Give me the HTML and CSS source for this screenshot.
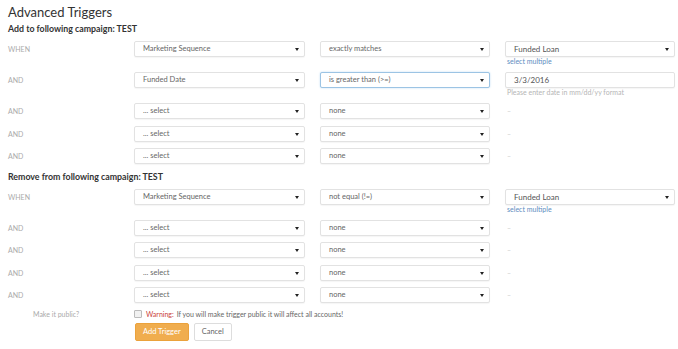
FILE: index.html
```html
<!DOCTYPE html>
<html lang="en">
<head>
  <meta charset="UTF-8" />
  <title>Advanced Triggers</title>
  <link rel="stylesheet" href="styles.css">
</head>
<body>
  <div class="page">
    <h1>Advanced Triggers</h1>

    <h2 class="section-title">Add to following campaign: TEST</h2>
    <div class="row">
      <div class="label">WHEN</div>
      <div class="select">Marketing Sequence</div>
      <div class="select">exactly matches</div>
      <div class="value">
        <div class="select dark">Funded Loan</div>
        <a class="help link">select multiple</a>
      </div>
    </div>
    <div class="row">
      <div class="label">AND</div>
      <div class="select">Funded Date</div>
      <div class="select focused">is greater than (&gt;=)</div>
      <div class="value">
        <div class="input">3/3/2016</div>
        <div class="help">Please enter date in mm/dd/yy format</div>
      </div>
    </div>
    <div class="row">
      <div class="label">AND</div>
      <div class="select">... select</div>
      <div class="select">none</div>
      <div class="dash">&ndash;</div>
    </div>
    <div class="row">
      <div class="label">AND</div>
      <div class="select">... select</div>
      <div class="select">none</div>
      <div class="dash">&ndash;</div>
    </div>
    <div class="row">
      <div class="label">AND</div>
      <div class="select">... select</div>
      <div class="select">none</div>
      <div class="dash">&ndash;</div>
    </div>

    <h2 class="section-title">Remove from following campaign: TEST</h2>
    <div class="row">
      <div class="label">WHEN</div>
      <div class="select">Marketing Sequence</div>
      <div class="select">not equal (!=)</div>
      <div class="value">
        <div class="select dark">Funded Loan</div>
        <a class="help link">select multiple</a>
      </div>
    </div>
    <div class="row">
      <div class="label">AND</div>
      <div class="select">... select</div>
      <div class="select">none</div>
      <div class="dash">&ndash;</div>
    </div>
    <div class="row">
      <div class="label">AND</div>
      <div class="select">... select</div>
      <div class="select">none</div>
      <div class="dash">&ndash;</div>
    </div>
    <div class="row">
      <div class="label">AND</div>
      <div class="select">... select</div>
      <div class="select">none</div>
      <div class="dash">&ndash;</div>
    </div>
    <div class="row">
      <div class="label">AND</div>
      <div class="select">... select</div>
      <div class="select">none</div>
      <div class="dash">&ndash;</div>
    </div>

    <div class="public-row">
      <div class="label public-label">Make it public?</div>
      <div class="public-check">
        <span class="checkbox"></span>
        <span class="warning">Warning:</span> If you will make trigger public it will affect all accounts!
      </div>
    </div>

    <div class="actions">
      <button class="btn btn-primary">Add Trigger</button>
      <button class="btn">Cancel</button>
    </div>
  </div>
</body>
</html>
```

FILE: styles.css
```css
body {
  margin: 0;
  background-color: #fff;
  font-family: Lato, "Open Sans", sans-serif;
  color: #555;
}
.page {
  padding: 4px 3px 0 8px;
}
h1 {
  margin: 0 0 3px;
  font-size: 13px;
  line-height: 16px;
  font-weight: normal;
  color: #333;
}
.section-title {
  margin: 0 0 6px;
  font-size: 8.8px;
  line-height: 12px;
  font-weight: bold;
  color: #333;
}
.row {
  display: grid;
  grid-template-columns: 111px 171px 170px 170px;
  column-gap: 15px;
  align-items: start;
  margin-bottom: 6.5px;
}
.row:has(.help) {
  margin-bottom: 6px;
}
.label {
  font-size: 7px;
  line-height: 16px;
  color: #aaa;
  text-transform: uppercase;
}
.select,
.input {
  position: relative;
  box-sizing: border-box;
  height: 16px;
  padding: 0 8px;
  font-size: 7.5px;
  line-height: 14px;
  color: #666;
  background-color: #fff;
  border: 1px solid #e2e2e2;
  border-radius: 2px;
  box-shadow: 0 1px 1px rgba(0,0,0,0.04);
}
.select::after {
  content: "";
  position: absolute;
  right: 5px;
  top: 6px;
  border-left: 2px solid transparent;
  border-right: 2px solid transparent;
  border-top: 3px solid #222;
}
.select.dark,
.input {
  color: #555;
  font-size: 8px;
}
.select.focused {
  border-color: #9cc4e4;
  box-shadow: 0 0 2px rgba(102,175,233,0.45);
}
.help {
  display: block;
  font-size: 7px;
  line-height: 9px;
  padding-left: 2px;
  color: #b5b5b5;
}
.link {
  color: #5d8cc0;
}
.dash {
  padding-left: 2px;
  font-size: 7px;
  line-height: 16px;
  color: #ccc;
}
.public-row {
  display: grid;
  grid-template-columns: 111px auto;
  column-gap: 15px;
  margin-top: -2px;
}
.public-label {
  padding-left: 25px;
  text-transform: none;
  line-height: 12px;
}
.public-check {
  display: flex;
  align-items: center;
  gap: 3px;
  font-size: 7px;
  line-height: 12px;
  color: #666;
}
.checkbox {
  width: 6px;
  height: 6px;
  margin-right: 1px;
  border: 1px solid #bbb;
  border-radius: 1px;
  background-color: #f1f1f1;
}
.warning {
  color: #c9403a;
}
.actions {
  display: flex;
  gap: 5px;
  margin: 3px 0 0 127px;
}
.btn {
  height: 18px;
  padding: 0 7px;
  font-family: Lato, "Open Sans", sans-serif;
  font-size: 7.5px;
  color: #666;
  background-color: #fff;
  border: 1px solid #ddd;
  border-radius: 2px;
  cursor: pointer;
}
.btn-primary {
  color: #fff;
  background-color: #f0ad4e;
  border-color: #eba23c;
}
```
